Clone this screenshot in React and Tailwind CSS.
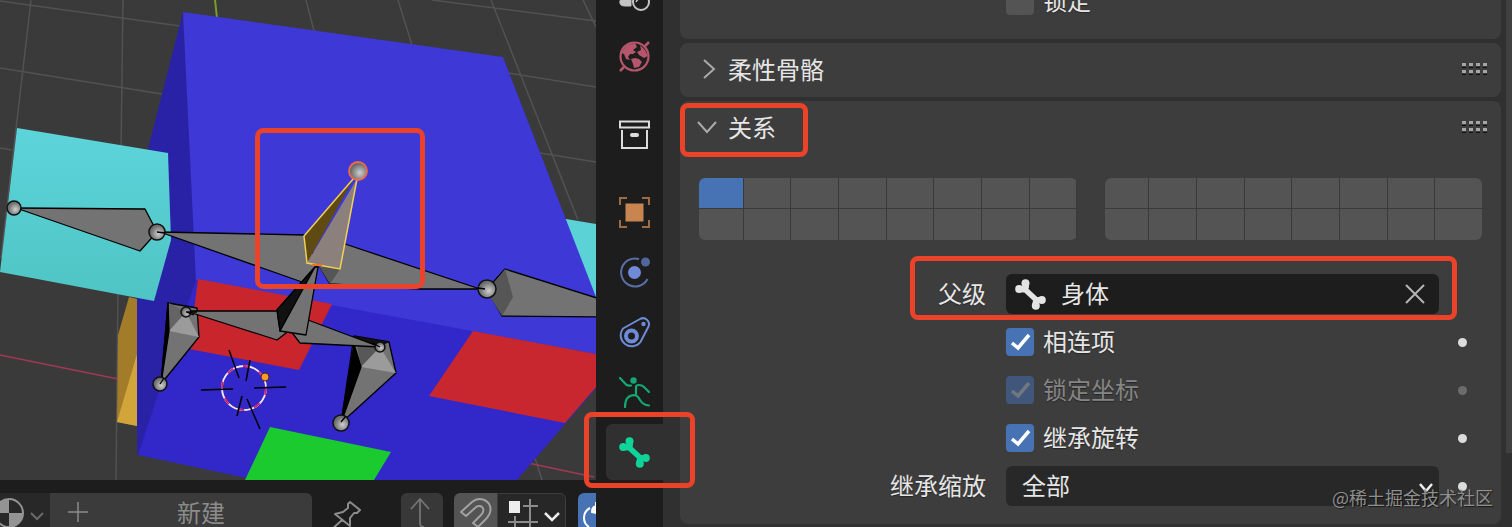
import { useState } from 'react'
import clsx from 'clsx'

const BoneIcon = ({ className }) => (
    <svg viewBox="0 0 31 31" className={className} fill="currentColor" stroke="currentColor">
        <path d="M8 8.5L23 22.5" strokeWidth="5.5" fill="none" />
        <path
            d="M10.5 4.5L11 8L8.5 10.500L4.5 10M26.5 21L23 21L20.500 23.500L21 27"
            strokeWidth="6"
            strokeLinejoin="round"
        />
        <g stroke="none">
            <circle cx="10.5" cy="4.2" r="4" />
            <circle cx="4.2" cy="10" r="4" />
            <circle cx="26.8" cy="21" r="4" />
            <circle cx="20.8" cy="26.8" r="4" />
        </g>
    </svg>
)

const SceneIcon = () => (
    <svg viewBox="0 0 31 31" className="size-[31px] text-[#c4c4c4]" fill="none" stroke="currentColor">
        <path d="M7 5L1 20Q0 25 6 25H12V8Z" fill="currentColor" />
        <circle cx="22" cy="21" r="8" strokeWidth="2" />
        <path d="M17 21Q19 17 23 17" strokeWidth="1.5" />
    </svg>
)

const WorldIcon = () => (
    <svg viewBox="0 0 31 31" className="size-[31px] text-[#b5566c]" fill="none" stroke="currentColor">
        <circle cx="15.5" cy="15.5" r="14" strokeWidth="2.2" />
        <path d="M1 30L5 26M26 5L30 1" strokeWidth="2.5" />
        <g fill="currentColor" stroke="none">
            <path d="M2 12L8 4L16 2L18 6L14 9L17 11L14 13L11 13L9 16L11 19L7 18L5 13Z" />
            <path d="M12 18L16 17L20 18L23 21L20 26L15 27L14 23Z" />
            <path d="M21 4L26 9L29 15L25 17L20 14L18 11L22 9Z" />
        </g>
    </svg>
)

const CollectionIcon = () => (
    <svg viewBox="0 0 31 31" className="size-[31px] text-[#dcdcdc]" fill="none" stroke="currentColor" strokeWidth="2">
        <path d="M1 2.5H30V8.5H1ZM3 11V29H28V11" />
        <rect x="11" y="14" width="9" height="4" rx="2" fill="currentColor" stroke="none" />
    </svg>
)

const ObjectIcon = () => (
    <svg viewBox="0 0 31 31" className="size-[31px] text-[#c98550]" fill="none" stroke="currentColor">
        <rect x="6.5" y="6.5" width="18" height="18" fill="currentColor" stroke="none" />
        <path d="M1 8V1H8M23 1H30V8M30 23V30H23M8 30H1V23" strokeWidth="2" opacity=".75" />
    </svg>
)

const PhysicsIcon = () => (
    <svg viewBox="0 0 31 31" className="size-[31px] text-[#6f8bd8]" fill="none" stroke="currentColor">
        <circle cx="15.5" cy="15.5" r="6.5" fill="currentColor" stroke="none" />
        <circle cx="26.5" cy="5" r="4.5" fill="#52659b" stroke="none" />
        <path d="M20 2A14 14 0 1 0 28.5 22" strokeWidth="2" opacity=".75" />
    </svg>
)

const ConstraintIcon = () => (
    <svg viewBox="0 0 31 31" className="size-[31px] text-[#6f8bd8]" fill="none" stroke="currentColor">
        <path d="M4 11.5L21 2A6 6 0 0 1 29.5 9.5L21.5 25A11 11 0 1 1 4 11.5Z" strokeWidth="2" />
        <circle cx="12.5" cy="19" r="5.5" strokeWidth="4" />
        <circle cx="24.5" cy="7" r="2.2" fill="currentColor" stroke="none" />
    </svg>
)

const ArmatureIcon = () => (
    <svg viewBox="0 0 31 31" className="size-[31px] text-[#14a873]" fill="none" stroke="currentColor" strokeWidth="2.2" strokeLinecap="round">
        <circle cx="14.5" cy="3.5" r="3.2" fill="currentColor" stroke="none" />
        <path d="M1 1L7 7.5Q9 9 12 8.5M17 17V10Q17 8 20 8Q23 8 25 10L30 15" />
        <path d="M6 30Q6 18 16 18Q19 19 21 23Q24 28 30 28.5" />
    </svg>
)

const tabGroups = [
    [
        { name: '场景', Icon: SceneIcon },
        { name: '世界', Icon: WorldIcon },
    ],
    [{ name: '集合', Icon: CollectionIcon }],
    [
        { name: '物体', Icon: ObjectIcon },
        { name: '物理', Icon: PhysicsIcon },
        { name: '约束', Icon: ConstraintIcon },
        { name: '骨架', Icon: ArmatureIcon },
        {
            name: '骨骼',
            Icon: () => <BoneIcon className="size-[31px] text-[#0fd49a]" />,
            active: true,
        },
    ],
]

// red outline that points at a part of the interface
const Highlight = ({ className }) => (
    <span
        aria-hidden="true"
        className={clsx(
            'pointer-events-none absolute z-10 rounded-lg border-5 border-[#ea4329]',
            className
        )}
    />
)

const gridLines =
    'M0 1L180 26M0 68L162 94M0 148L12 150M31 0L1 258M123 0L121 150M118 290L116 480M306 0L314 31M398 0L412 45M491 0L578 220M583 0L596 27M432 0L596 21M508 73L596 87M540 153L596 162M535 458L542 480'

const joints = [
    [14, 208, 7],
    [157, 232, 8],
    [487, 289, 9],
    [186, 312, 5],
    [160, 384, 7],
    [380, 347, 5],
    [341, 423, 8],
]

const Viewport = () => (
    <svg
        viewBox="0 0 596 480"
        preserveAspectRatio="xMinYMin slice"
        className="min-h-0 w-full flex-1 bg-[#3a3a3a]"
        role="img"
        aria-label="3D"
    >
        <defs>
            <radialGradient id="joint" cx=".6" cy=".6">
                <stop offset="0" stopColor="#cfcfcf" />
                <stop offset="1" stopColor="#6d6d6d" />
            </radialGradient>
            <linearGradient id="cyan" x2="0" y2="1">
                <stop offset="0" stopColor="#5cd4da" />
                <stop offset="1" stopColor="#4fc4c4" />
            </linearGradient>
        </defs>
        <path d={gridLines} stroke="#525252" strokeWidth="1.5" fill="none" />
        <path d="M215 0L217 18" stroke="#7c9c28" strokeWidth="2" />
        <path d="M0 355L118 379M528 463L594 477" stroke="#a03a52" strokeWidth="1.5" />

        {/* meshes */}
        <path d="M560 218L596 224V300L580 290Z" fill="#5ad2d6" />
        <path d="M183 12L137 192V455L197 380V280Z" fill="#2a22a6" />
        <path d="M183 12L503 57L596 297V356L196 282Z" fill="#3d38d6" />
        <path d="M196 280L596 354V388L517 480H256L138 455Z" fill="#3227c8" />
        <path d="M129 297L137 299V426L117 422L118 335Z" fill="#a37c29" />
        <path d="M137 354V426L117 422Z" fill="#d2a53a" />
        <path d="M17 128L168 153L171 240L154 301L0 272Z" fill="url(#cyan)" />
        <path d="M198 279L332 304L299 370L189 349Z" fill="#c9252d" />
        <path d="M473 331L596 354V387L565 423L429 396Z" fill="#c9272f" />
        <path d="M270 427L391 452L374 480H245Z" fill="#1bca2e" />

        {/* bones */}
        <g stroke="#000" strokeWidth="1.3" strokeLinejoin="round" fill="#737373">
            <path d="M16 208L145 209L157 232L140 251Z" />
            <path d="M160 232L305 235L318 265L302 282Z" />
            <path d="M318 264L345 244L480 289L420 289L330 284Z" />
            <path d="M318 265L340 269L330 284Z" fill="#555" stroke="none" />
            <path d="M487 289L505 269L600 299V317L502 316Z" />
            <path d="M505 269L513 297L502 316L487 292Z" fill="#565656" stroke="none" />
            <path d="M168 303L197 308L199 337L161 384Z" />
            <path d="M169 303L186 312L169 331Z" fill="#646464" stroke="none" />
            <path d="M186 312L169 331L199 337Z" fill="#9b9b9b" stroke="none" />
            <path d="M168 303L169 331L161 384Z" fill="#000" />
            <path d="M354 336L389 342L396 373L341 423Z" />
            <path d="M354 336L389 342L380 347L357 345Z" fill="#111" stroke="none" />
            <path d="M357 345L380 347L361 367Z" fill="#585858" stroke="none" />
            <path d="M380 347L361 367L396 373Z" fill="#9b9b9b" stroke="none" />
            <path d="M354 344L361 367L341 423Z" fill="#000" />
            <path d="M186 311L277 311L290 330L277 340Z" />
            <path d="M290 330L308 320L380 347L300 343Z" />
            <path d="M315 267L277 310L280 331L306 335L318 267Z" />
            <path d="M315 267L277 310L280 331Z" fill="#111" />
        </g>
        {joints.map(([x, y, r]) => (
            <circle key={`${x}-${y}`} cx={x} cy={y} r={r} fill="url(#joint)" stroke="#111" strokeWidth="1.5" />
        ))}
        <path d="M165 233L157 232M478 288L485 289M197 312L186 312L194 315M372 343L380 347M164 378L160 384M346 416L341 422" stroke="#000" strokeWidth="1.3" fill="none" />

        {/* selected bone */}
        <path d="M354 178L304 236L307 263Z" fill="#5f4a12" />
        <path d="M357 179L307 263L340 269Z" fill="#8b807c" />
        <path d="M354 178L304 236L307 263L340 269L357 179" fill="none" stroke="#f0cf55" strokeWidth="1.5" />
        <path d="M312 265H322" stroke="#f0702a" strokeWidth="2" />
        <circle cx="358" cy="171" r="9" fill="url(#joint)" stroke="#ee6b45" strokeWidth="1.8" />

        {/* 3D cursor */}
        <circle cx="244" cy="388" r="22" fill="none" stroke="#f2eaf8" strokeWidth="1.8" />
        <circle cx="244" cy="388" r="22" fill="none" stroke="#d81f62" strokeWidth="1.8" strokeDasharray="7 10" />
        <path d="M229 350L239 378M250 360L246 381M201 390L233 389M254 388L286 387M242 396L237 416M247 399L260 429" stroke="#000" strokeWidth="1.5" />
        <circle cx="265" cy="377" r="4" fill="#ff9a2e" stroke="#4a2a10" />

        <rect x="257.5" y="130.5" width="165" height="156" rx="6" fill="none" stroke="#ea4329" strokeWidth="5" />
    </svg>
)

const ViewportFooter = () => (
    <div className="flex h-[47px] shrink-0 items-start overflow-hidden bg-[#1d1d1d] pt-[13px]">
        <button aria-label="材质" className="flex h-10 w-[50px] items-center bg-[#282828]">
            <svg viewBox="0 0 50 40" className="h-10 w-[50px]" fill="none">
                <circle cx="9" cy="20" r="14" stroke="#949494" strokeWidth="2" />
                <path d="M9 20V6A14 14 0 0 0 -5 20ZM9 20V34A14 14 0 0 0 23 20Z" fill="#949494" />
                <path d="M31 20L37 26L43 20" stroke="#6a6a6a" strokeWidth="2" />
            </svg>
        </button>
        <button className="relative flex h-10 flex-1 items-center justify-center rounded-r-md bg-[#3b3b3b] pb-0.5 pl-10 leading-6 text-[#8c8c8c]">
            <svg viewBox="0 0 20 20" className="absolute left-[18px] size-5" stroke="currentColor" strokeWidth="1.5">
                <path d="M0 10H20M10 0V20" />
            </svg>
            新建
        </button>
        <button aria-label="固定" className="h-10 w-[89px] pl-[18px] text-[#8c8c8c]">
            <svg viewBox="0 0 32 32" className="mt-[5px] size-8" fill="none" stroke="currentColor" strokeWidth="2" strokeLinejoin="round">
                <path d="M20 2L30 10L27 13L24 13L20 18L20 26L5 14L13 12L18 8L18 4ZM12 20L0 31" />
            </svg>
        </button>
        <button aria-label="上移" className="mr-[11px] flex h-10 w-[42px] justify-center rounded-md bg-[#383838] text-[#757575]">
            <svg viewBox="0 0 24 40" className="h-10 w-6" fill="none" stroke="currentColor" strokeWidth="1.8">
                <path d="M1 16L10 6L19 16M10 6V30Q10 34 14 34" />
            </svg>
        </button>
        <div className="mr-3 flex">
            <button aria-label="吸附" className="flex h-10 w-[43px] justify-center rounded-l-md bg-[#545454] text-[#a2a2a2]">
                <svg viewBox="0 0 32 32" className="mt-1 size-8" fill="none" stroke="currentColor" strokeWidth="2" strokeLinejoin="round">
                    <path d="M1 15L12 5C19 -1 28 3 30 9C32 15 29 19 25 23L18 30L13 26L21 18C24 15 24 12 22 10C20 8 17 9 15 11L6 19Z" />
                </svg>
            </button>
            <button aria-label="吸附选项" className="h-10 w-[69px] rounded-r-md border border-[#3d3d3d] bg-[#272727]">
                <svg viewBox="0 0 67 38" className="h-[38px] w-[67px]" fill="none">
                    <path d="M25 12H40M32 5V38M10 28H40M17 22V38" stroke="#8c8c8c" strokeWidth="2" />
                    <rect x="11" y="7" width="11" height="12" fill="#eee" />
                    <path d="M47 19L54 26L61 19" stroke="#eee" strokeWidth="2.5" />
                </svg>
            </button>
        </div>
        <button aria-label="衰减编辑" className="h-10 w-[18px] overflow-hidden rounded-l-md bg-[#4772b3]">
            <svg viewBox="0 0 18 40" className="h-10 w-[18px]" fill="none" stroke="#fff" strokeWidth="2">
                <path d="M12 15A11 11 0 0 0 11 34" />
                <path d="M18 9V14M14 19Q14 14 18 13V20Z" fill="#fff" />
            </svg>
        </button>
    </div>
)

const PropertyTabs = () => (
    <nav className="relative z-10 w-[67px] shrink-0 bg-[#1d1d1d] pl-2.5">
        <div className="-mt-8 flex flex-col gap-[22px]">
            {tabGroups.map((group, i) => (
                <div key={i} className="flex flex-col gap-1">
                    {group.map(({ name, Icon, active }) => (
                        <button
                            key={name}
                            aria-label={name}
                            className={clsx(
                                'relative flex h-14 items-center justify-center rounded-l-md',
                                active && 'bg-[#303030]'
                            )}
                        >
                            <Icon />
                            {active && <Highlight className="-top-3 -right-8 -bottom-2 -left-[22px]" />}
                        </button>
                    ))}
                </div>
            ))}
        </div>
    </nav>
)

const DragDots = () => (
    <svg viewBox="0 0 25 13" className="ml-auto h-[13px] w-[25px]">
        {[0, 7].map((y) =>
            [0, 7, 14, 21].map((x) => (
                <g key={`${x}-${y}`}>
                    <rect x={x} y={y} width="4" height="3" fill="#a5a5a5" />
                    <rect x={x} y={y + 4} width="4" height="1" fill="#111" />
                </g>
            ))
        )}
    </svg>
)

const PanelHeader = ({ title, open, children }) => (
    <div className="relative flex h-[54px] items-center pr-3.5 pb-0.5 pl-[17px]">
        <button aria-expanded={open} className="flex items-center gap-[11px]">
            <svg viewBox="0 0 20 20" className="size-5" fill="none" stroke="#aaa" strokeWidth="2">
                <path d={open ? 'M1 5L10 15L19 5' : 'M7 1L17 10L7 19'} />
            </svg>
            {title}
        </button>
        <DragDots />
        {children}
    </div>
)

const Row = ({ label, htmlFor, dot, children }) => (
    <div className="relative grid h-12 grid-cols-[307fr_433fr_43px] items-center">
        <label htmlFor={htmlFor} className="pr-5 pb-0.5 text-right">
            {label}
        </label>
        {children}
        {dot && (
            <span
                className={clsx(
                    'ml-[19px] size-[9px] rounded-full',
                    dot === 'dim' ? 'bg-[#6c6c6c]' : 'bg-[#dcdcdc]'
                )}
            />
        )}
    </div>
)

const Check = ({ label, defaultChecked = false, disabled }) => {
    const [checked, setChecked] = useState(defaultChecked)

    return (
        <label className={clsx('flex items-center gap-[9px]', disabled && 'text-[#858585]')}>
            <span className="relative flex size-7">
                <input
                    type="checkbox"
                    checked={checked}
                    disabled={disabled}
                    onChange={(e) => setChecked(e.target.checked)}
                    className="size-7 appearance-none rounded-sm bg-[#545454] checked:bg-[#4772b3] disabled:checked:bg-[#40567b]"
                />
                {checked && (
                    <svg
                        viewBox="0 0 28 28"
                        className="pointer-events-none absolute inset-0"
                        fill="none"
                        stroke={disabled ? '#6f7780' : '#fff'}
                        strokeWidth="3.5"
                    >
                        <path d="M6 15L12 20L23 7" />
                    </svg>
                )}
            </span>
            <span className="pb-0.5">{label}</span>
        </label>
    )
}

const LayerGrid = ({ name, selected }) => {
    const [current, setCurrent] = useState(selected)

    return (
        <div className="grid flex-1 grid-cols-[44fr_repeat(7,47fr)] grid-rows-[30px_31px] gap-px overflow-hidden rounded-md bg-[#3a3a3a]">
            {Array.from({ length: 16 }, (_, i) => (
                <button
                    key={i}
                    aria-label={`${name} ${i + 1}`}
                    onClick={() => setCurrent(i)}
                    className={i === current ? 'bg-[#4772b3]' : 'bg-[#545454]'}
                />
            ))}
        </div>
    )
}

const Properties = () => (
    <main className="flex min-w-0 flex-1 bg-[#303030] pl-[17px]">
        <div className="flex min-w-0 flex-1 flex-col gap-1 text-[#e6e6e6] text-shadow-[0_1px_1px_rgb(0_0_0/0.4)]">
            <section className="-mt-[23px] rounded-lg bg-[#3d3d3d] px-[19px] pb-3.5">
                <Row>
                    <Check label="锁定" />
                </Row>
            </section>
            <section className="rounded-lg bg-[#3d3d3d]">
                <PanelHeader title="柔性骨骼" open={false} />
            </section>
            <section className="rounded-lg bg-[#3d3d3d] pb-3.5">
                <PanelHeader title="关系" open>
                    <Highlight className="top-0.5 -bottom-0.5 left-0 w-32" />
                </PanelHeader>
                <div className="px-[19px] pt-[23px]">
                    <div className="mb-[30px] flex gap-7">
                        <LayerGrid name="层" selected={0} />
                        <LayerGrid name="层 B" />
                    </div>
                    <Row label="父级" htmlFor="parent">
                        <div className="flex h-10 items-center gap-[15px] rounded-md bg-[#1d1d1d] pr-3.5 pl-[9px]">
                            <BoneIcon className="size-[31px] shrink-0 text-[#e4e4e4]" />
                            <input
                                id="parent"
                                defaultValue="身体"
                                className="min-w-0 flex-1 bg-transparent pb-0.5 outline-none"
                            />
                            <button aria-label="清除">
                                <svg viewBox="0 0 20 20" className="size-5" stroke="#b5b5b5" strokeWidth="2">
                                    <path d="M1 1L19 19M19 1L1 19" />
                                </svg>
                            </button>
                        </div>
                        <Highlight className="-top-3.5 right-[25px] -bottom-0.5 left-[27%]" />
                    </Row>
                    <Row dot="on">
                        <Check label="相连项" defaultChecked />
                    </Row>
                    <Row dot="dim">
                        <Check label="锁定坐标" defaultChecked disabled />
                    </Row>
                    <Row dot="on">
                        <Check label="继承旋转" defaultChecked />
                    </Row>
                    <Row label="继承缩放" htmlFor="scale" dot="on">
                        <div className="relative">
                            <select
                                id="scale"
                                className="h-10 w-full appearance-none rounded-md bg-[#282828] px-4 pb-0.5 outline-none"
                            >
                                <option>全部</option>
                            </select>
                            <svg
                                viewBox="0 0 14 10"
                                className="pointer-events-none absolute top-[17px] right-1.5 h-2.5 w-3.5"
                                fill="none"
                                stroke="#eee"
                                strokeWidth="2.5"
                            >
                                <path d="M1 1L7 8L13 1" />
                            </svg>
                        </div>
                    </Row>
                </div>
            </section>
        </div>
        <div className="ml-[5px] w-1.5">
            <div className="h-[86%] bg-[#404040]" />
        </div>
    </main>
)

export default function App() {
    return (
        <div className="relative grid h-screen grid-cols-[596fr_916fr] overflow-hidden bg-[#1d1d1d] font-['Noto_Sans_CJK_SC',sans-serif] text-2xl/8">
            <div className="flex min-h-0 min-w-0 flex-col">
                <Viewport />
                <ViewportFooter />
            </div>
            <div className="flex min-h-0 min-w-0">
                <PropertyTabs />
                <Properties />
            </div>
            <p className="absolute right-[19px] bottom-[18px] z-20 text-lg/6 text-[#8f8f8f] text-shadow-[1px_1px_1px_rgb(0_0_0/0.6)]">
                @稀土掘金技术社区
            </p>
        </div>
    )
}
